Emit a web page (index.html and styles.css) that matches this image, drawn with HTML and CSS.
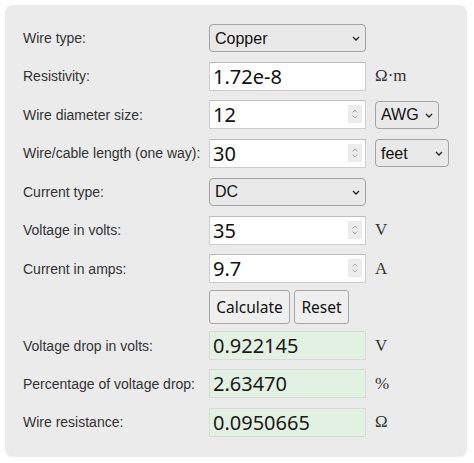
FILE: index.html
```html
<!DOCTYPE html>
<html>
<head>
<meta charset="utf-8">
<link rel="stylesheet" href="styles.css">
</head>
<body>
<div class="panel">
  <div class="grid">
    <label class="lbl">Wire type:</label>
    <div class="selwrap wide">
      <select class="sel"><option>Copper</option></select>
      <svg class="chev" width="8" height="5" viewBox="0 0 8 5"><path d="M1 1 L4 4 L7 1" fill="none" stroke="#222" stroke-width="1.3"/></svg>
    </div>
    <span></span>

    <label class="lbl">Resistivity:</label>
    <input class="inp" type="text" value="1.72e-8">
    <span class="unit">Ω·m</span>

    <label class="lbl">Wire diameter size:</label>
    <div class="numwrap">
      <input class="inp" type="text" value="12">
      <span class="spin"><svg width="8" height="12" viewBox="0 0 8 12"><path d="M1.5 4.5 L4 2 L6.5 4.5 M1.5 7.5 L4 10 L6.5 7.5" fill="none" stroke="#a8a8a8" stroke-width="1"/></svg></span>
    </div>
    <div class="selwrap awg">
      <select class="sel"><option>AWG</option></select>
      <svg class="chev" width="8" height="5" viewBox="0 0 8 5"><path d="M1 1 L4 4 L7 1" fill="none" stroke="#222" stroke-width="1.3"/></svg>
    </div>

    <label class="lbl">Wire/cable length (one way):</label>
    <div class="numwrap">
      <input class="inp" type="text" value="30">
      <span class="spin"><svg width="8" height="12" viewBox="0 0 8 12"><path d="M1.5 4.5 L4 2 L6.5 4.5 M1.5 7.5 L4 10 L6.5 7.5" fill="none" stroke="#a8a8a8" stroke-width="1"/></svg></span>
    </div>
    <div class="selwrap feet">
      <select class="sel"><option>feet</option></select>
      <svg class="chev" width="8" height="5" viewBox="0 0 8 5"><path d="M1 1 L4 4 L7 1" fill="none" stroke="#222" stroke-width="1.3"/></svg>
    </div>

    <label class="lbl">Current type:</label>
    <div class="selwrap wide">
      <select class="sel"><option>DC</option></select>
      <svg class="chev" width="8" height="5" viewBox="0 0 8 5"><path d="M1 1 L4 4 L7 1" fill="none" stroke="#222" stroke-width="1.3"/></svg>
    </div>
    <span></span>

    <label class="lbl">Voltage in volts:</label>
    <div class="numwrap">
      <input class="inp" type="text" value="35">
      <span class="spin"><svg width="8" height="12" viewBox="0 0 8 12"><path d="M1.5 4.5 L4 2 L6.5 4.5 M1.5 7.5 L4 10 L6.5 7.5" fill="none" stroke="#a8a8a8" stroke-width="1"/></svg></span>
    </div>
    <span class="unit">V</span>

    <label class="lbl">Current in amps:</label>
    <div class="numwrap">
      <input class="inp" type="text" value="9.7">
      <span class="spin"><svg width="8" height="12" viewBox="0 0 8 12"><path d="M1.5 4.5 L4 2 L6.5 4.5 M1.5 7.5 L4 10 L6.5 7.5" fill="none" stroke="#a8a8a8" stroke-width="1"/></svg></span>
    </div>
    <span class="unit">A</span>

    <span></span>
    <div class="btns">
      <button class="btn calc">Calculate</button>
      <button class="btn reset">Reset</button>
    </div>
    <span></span>

    <label class="lbl">Voltage drop in volts:</label>
    <input class="inp out" type="text" value="0.922145" readonly>
    <span class="unit">V</span>

    <label class="lbl">Percentage of voltage drop:</label>
    <input class="inp out" type="text" value="2.63470" readonly>
    <span class="unit">%</span>

    <label class="lbl">Wire resistance:</label>
    <input class="inp out" type="text" value="0.0950665" readonly>
    <span class="unit">Ω</span>
  </div>
</div>
</body>
</html>
```
FILE: styles.css
```css
html, body {
  margin: 0;
  padding: 0;
  background: #ffffff;
}

.panel {
  margin: 5px;
  width: 462px;
  height: 452px;
  box-sizing: border-box;
  background: #ebebeb;
  border-radius: 8px;
  padding: 13.8px 18px 15px 18px;
}

.grid {
  display: grid;
  grid-template-columns: 186px 166px 1fr;
  grid-auto-rows: 38.45px;
  align-items: center;
}

.lbl {
  font-family: "Liberation Sans", Arial, sans-serif;
  font-size: 14px;
  color: #333333;
  white-space: nowrap;
}

.unit {
  font-family: "Liberation Serif", "Times New Roman", serif;
  font-size: 17px;
  color: #333333;
}

.inp {
  display: block;
  width: 157px;
  height: 29px;
  box-sizing: border-box;
  margin: 0;
  border: 1px solid #cdcdcd;
  border-top-color: #bdbdbd;
  background: #ffffff;
  padding: 0 3px;
  font-family: "Noto Sans", sans-serif;
  font-size: 20px;
  color: #111111;
  outline: none;
}

.inp.out {
  background: #e3f1e3;
  border-color: #d3ddd3;
  color: #1a1a1a;
}

.numwrap {
  position: relative;
  width: 157px;
  height: 29px;
}

.spin {
  position: absolute;
  right: 4px;
  top: 5px;
  width: 14px;
  height: 18px;
  background: #ececec;
  display: flex;
  align-items: center;
  justify-content: center;
}

.selwrap {
  position: relative;
  height: 28px;
}

.selwrap.wide { width: 157px; }
.selwrap.awg { width: 64px; }
.selwrap.feet { width: 74px; }

.sel {
  -webkit-appearance: none;
  appearance: none;
  display: block;
  width: 100%;
  height: 28px;
  box-sizing: border-box;
  margin: 0;
  border: 1px solid #a3a3a3;
  border-radius: 4px;
  background: #e9e9e9;
  padding: 0 0 0 5px;
  font-family: "Liberation Sans", Arial, sans-serif;
  font-size: 16px;
  color: #111111;
  outline: none;
}

.chev {
  position: absolute;
  right: 6px;
  top: 12px;
  pointer-events: none;
}

.btns {
  display: flex;
  gap: 4px;
  align-items: center;
}

.btn {
  height: 34px;
  box-sizing: border-box;
  margin: 0;
  border: 1px solid #a6a6a6;
  border-radius: 3px;
  background: #efefef;
  font-family: "Noto Sans", sans-serif;
  font-size: 15.5px;
  color: #111111;
  padding: 0;
}

.btn.calc { width: 81px; }
.btn.reset { width: 55px; }
```
